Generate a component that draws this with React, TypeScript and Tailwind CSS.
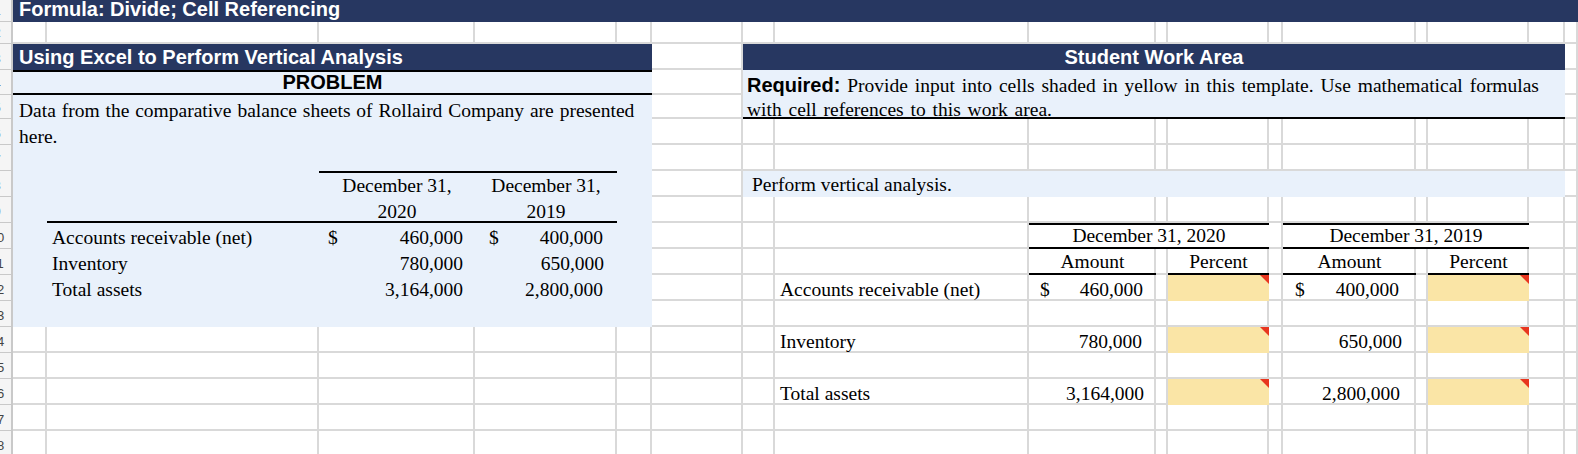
import React from "react";

const serif = "font-['Liberation_Serif','Times_New_Roman',serif]";
const sans = "font-['Liberation_Sans',Arial,sans-serif]";

const ROWS = 18;
const COLS = 18;

// yellow input cell with the red comment marker
const InputCell: React.FC<{ cls: string }> = ({ cls }) => (
  <div className={`${cls} relative bg-[#fae5a6]`}>
    <div className="absolute top-0 right-0 w-0 h-0 border-t-[9px] border-l-[9px] border-t-[#e8361f] border-l-transparent"></div>
  </div>
);

const Money: React.FC<{ cls: string; value: string; dollar?: boolean; pl: string; pr: string }> = ({
  cls,
  value,
  dollar,
  pl,
  pr,
}) => (
  <div className={`${cls} flex items-end justify-between ${pl} ${pr} ${serif} text-[19.5px] leading-[22px] text-black`}>
    <span>{dollar ? "$" : ""}</span>
    <span>{value}</span>
  </div>
);

export default function App() {
  const base: React.ReactNode[] = [];
  for (let r = 1; r <= ROWS; r++) {
    for (let c = 1; c <= COLS; c++) {
      if (c === 1) {
        base.push(
          <div
            key={`${r}-${c}`}
            style={{ gridRow: r, gridColumn: c }}
            className="overflow-hidden bg-[#f5f5f5] border-r-2 border-b border-[#c9c9c9] flex items-end"
          >
            <div className={`w-[30px] -ml-[18px] shrink-0 text-center text-[13px] leading-[20px] text-[#444] ${sans}`}>
              {r}
            </div>
          </div>
        );
      } else {
        base.push(
          <div
            key={`${r}-${c}`}
            style={{ gridRow: r, gridColumn: c }}
            className="bg-white border-r-2 border-b-2 border-[#d9d9d9]"
          ></div>
        );
      }
    }
  }

  const txt = `${serif} text-[19.5px] leading-[22px] text-black`;

  return (
    <div className="w-[1578px] h-[454px] overflow-hidden bg-white">
      <div className="grid grid-cols-[13px_34px_272px_156px_142px_35px_91px_32px_254px_127px_12px_101px_14px_133px_12px_101px_36px_1fr] grid-rows-[22px_22px_26px_25px_24px_26px_26px_26px_26px_26px_26px_26px_26px_26px_26px_26px_26px_26px]">
        {base}

        {/* title bar */}
        <div className={`col-[2/19] row-[1] bg-[#273761] flex items-end pl-[6px] pb-[2px] ${sans} font-bold text-[20px] leading-[22px] text-white whitespace-nowrap`}>
          Formula: Divide; Cell Referencing
        </div>

        {/* problem side */}
        <div className={`col-[2/7] row-[3] bg-[#273761] flex items-end pl-[6px] pb-[2px] ${sans} font-bold text-[20px] leading-[22px] text-white whitespace-nowrap`}>
          Using Excel to Perform Vertical Analysis
        </div>
        <div className="col-[2/7] row-[4/14] bg-[#e9f1fb]"></div>
        <div className={`col-[2/7] row-[4] border-y-2 border-black flex items-end justify-center ${sans} font-bold text-[20px] leading-[22px] text-black`}>
          PROBLEM
        </div>
        <div className={`col-[2/7] row-[5/7] pl-[6px] pr-[10px] pt-[3px] ${serif} text-[19.5px] leading-[26px] [word-spacing:1px] text-black`}>
          Data from the comparative balance sheets of Rollaird Company are presented here.
        </div>

        <div className="col-[4/6] row-[8] border-t-2 border-black"></div>
        <div className={`col-[4] row-[8] flex items-end justify-center ${txt}`}>December 31,</div>
        <div className={`col-[5] row-[8] flex items-end justify-center ${txt}`}>December 31,</div>
        <div className="col-[3/6] row-[9] border-b-2 border-black"></div>
        <div className={`col-[4] row-[9] flex items-end justify-center ${txt}`}>2020</div>
        <div className={`col-[5] row-[9] flex items-end justify-center ${txt}`}>2019</div>

        <div className={`col-[3] row-[10] flex items-end pl-[5px] ${txt}`}>Accounts receivable (net)</div>
        <Money cls="col-[4] row-[10]" value="460,000" dollar pl="pl-[9px]" pr="pr-[12px]" />
        <Money cls="col-[5] row-[10]" value="400,000" dollar pl="pl-[14px]" pr="pr-[14px]" />
        <div className={`col-[3] row-[11] flex items-end pl-[5px] ${txt}`}>Inventory</div>
        <Money cls="col-[4] row-[11]" value="780,000" pl="pl-[9px]" pr="pr-[12px]" />
        <Money cls="col-[5] row-[11]" value="650,000" pl="pl-[14px]" pr="pr-[13px]" />
        <div className={`col-[3] row-[12] flex items-end pl-[5px] ${txt}`}>Total assets</div>
        <Money cls="col-[4] row-[12]" value="3,164,000" pl="pl-[9px]" pr="pr-[12px]" />
        <Money cls="col-[5] row-[12]" value="2,800,000" pl="pl-[14px]" pr="pr-[14px]" />

        {/* student work area */}
        <div className={`col-[8/18] row-[3] bg-[#273761] flex items-end justify-center pb-[2px] ${sans} font-bold text-[20px] leading-[22px] text-white`}>
          Student Work Area
        </div>
        <div className={`col-[8/18] row-[4/6] bg-[#e9f1fb] border-b-2 border-black pl-[4px] pr-[20px] pt-[3px] ${serif} text-[19.5px] leading-[24px] [word-spacing:2px] text-black`}>
          <span className={`${sans} font-bold text-[20px] [word-spacing:0px]`}>Required:</span> Provide input into cells shaded in yellow in this
          template. Use mathematical formulas with cell references to this work area.
        </div>
        <div className={`col-[8/18] row-[8] bg-[#e9f1fb] flex items-end pl-[9px] pb-[1px] ${txt}`}>Perform vertical analysis.</div>

        <div className={`col-[10/13] row-[10] bg-white border-y-2 border-black flex items-end justify-center ${txt}`}>
          December 31, 2020
        </div>
        <div className={`col-[14/17] row-[10] bg-white border-y-2 border-black flex items-end justify-center ${txt}`}>
          December 31, 2019
        </div>
        <div className={`col-[10] row-[11] border-b-2 border-black flex items-end justify-center ${txt}`}>Amount</div>
        <div className={`col-[12] row-[11] border-b-2 border-black flex items-end justify-center ${txt}`}>Percent</div>
        <div className={`col-[14] row-[11] border-b-2 border-black flex items-end justify-center ${txt}`}>Amount</div>
        <div className={`col-[16] row-[11] border-b-2 border-black flex items-end justify-center ${txt}`}>Percent</div>

        <div className={`col-[9] row-[12] flex items-end pl-[5px] ${txt}`}>Accounts receivable (net)</div>
        <Money cls="col-[10] row-[12]" value="460,000" dollar pl="pl-[11px]" pr="pr-[13px]" />
        <InputCell cls="col-[12] row-[12]" />
        <Money cls="col-[14] row-[12]" value="400,000" dollar pl="pl-[12px]" pr="pr-[17px]" />
        <InputCell cls="col-[16] row-[12]" />

        <div className={`col-[9] row-[14] flex items-end pl-[5px] ${txt}`}>Inventory</div>
        <Money cls="col-[10] row-[14]" value="780,000" pl="pl-[11px]" pr="pr-[14px]" />
        <InputCell cls="col-[12] row-[14]" />
        <Money cls="col-[14] row-[14]" value="650,000" pl="pl-[12px]" pr="pr-[14px]" />
        <InputCell cls="col-[16] row-[14]" />

        <div className={`col-[9] row-[16] flex items-end pl-[5px] ${txt}`}>Total assets</div>
        <Money cls="col-[10] row-[16]" value="3,164,000" pl="pl-[11px]" pr="pr-[12px]" />
        <InputCell cls="col-[12] row-[16]" />
        <Money cls="col-[14] row-[16]" value="2,800,000" pl="pl-[12px]" pr="pr-[16px]" />
        <InputCell cls="col-[16] row-[16]" />
      </div>
    </div>
  );
}
